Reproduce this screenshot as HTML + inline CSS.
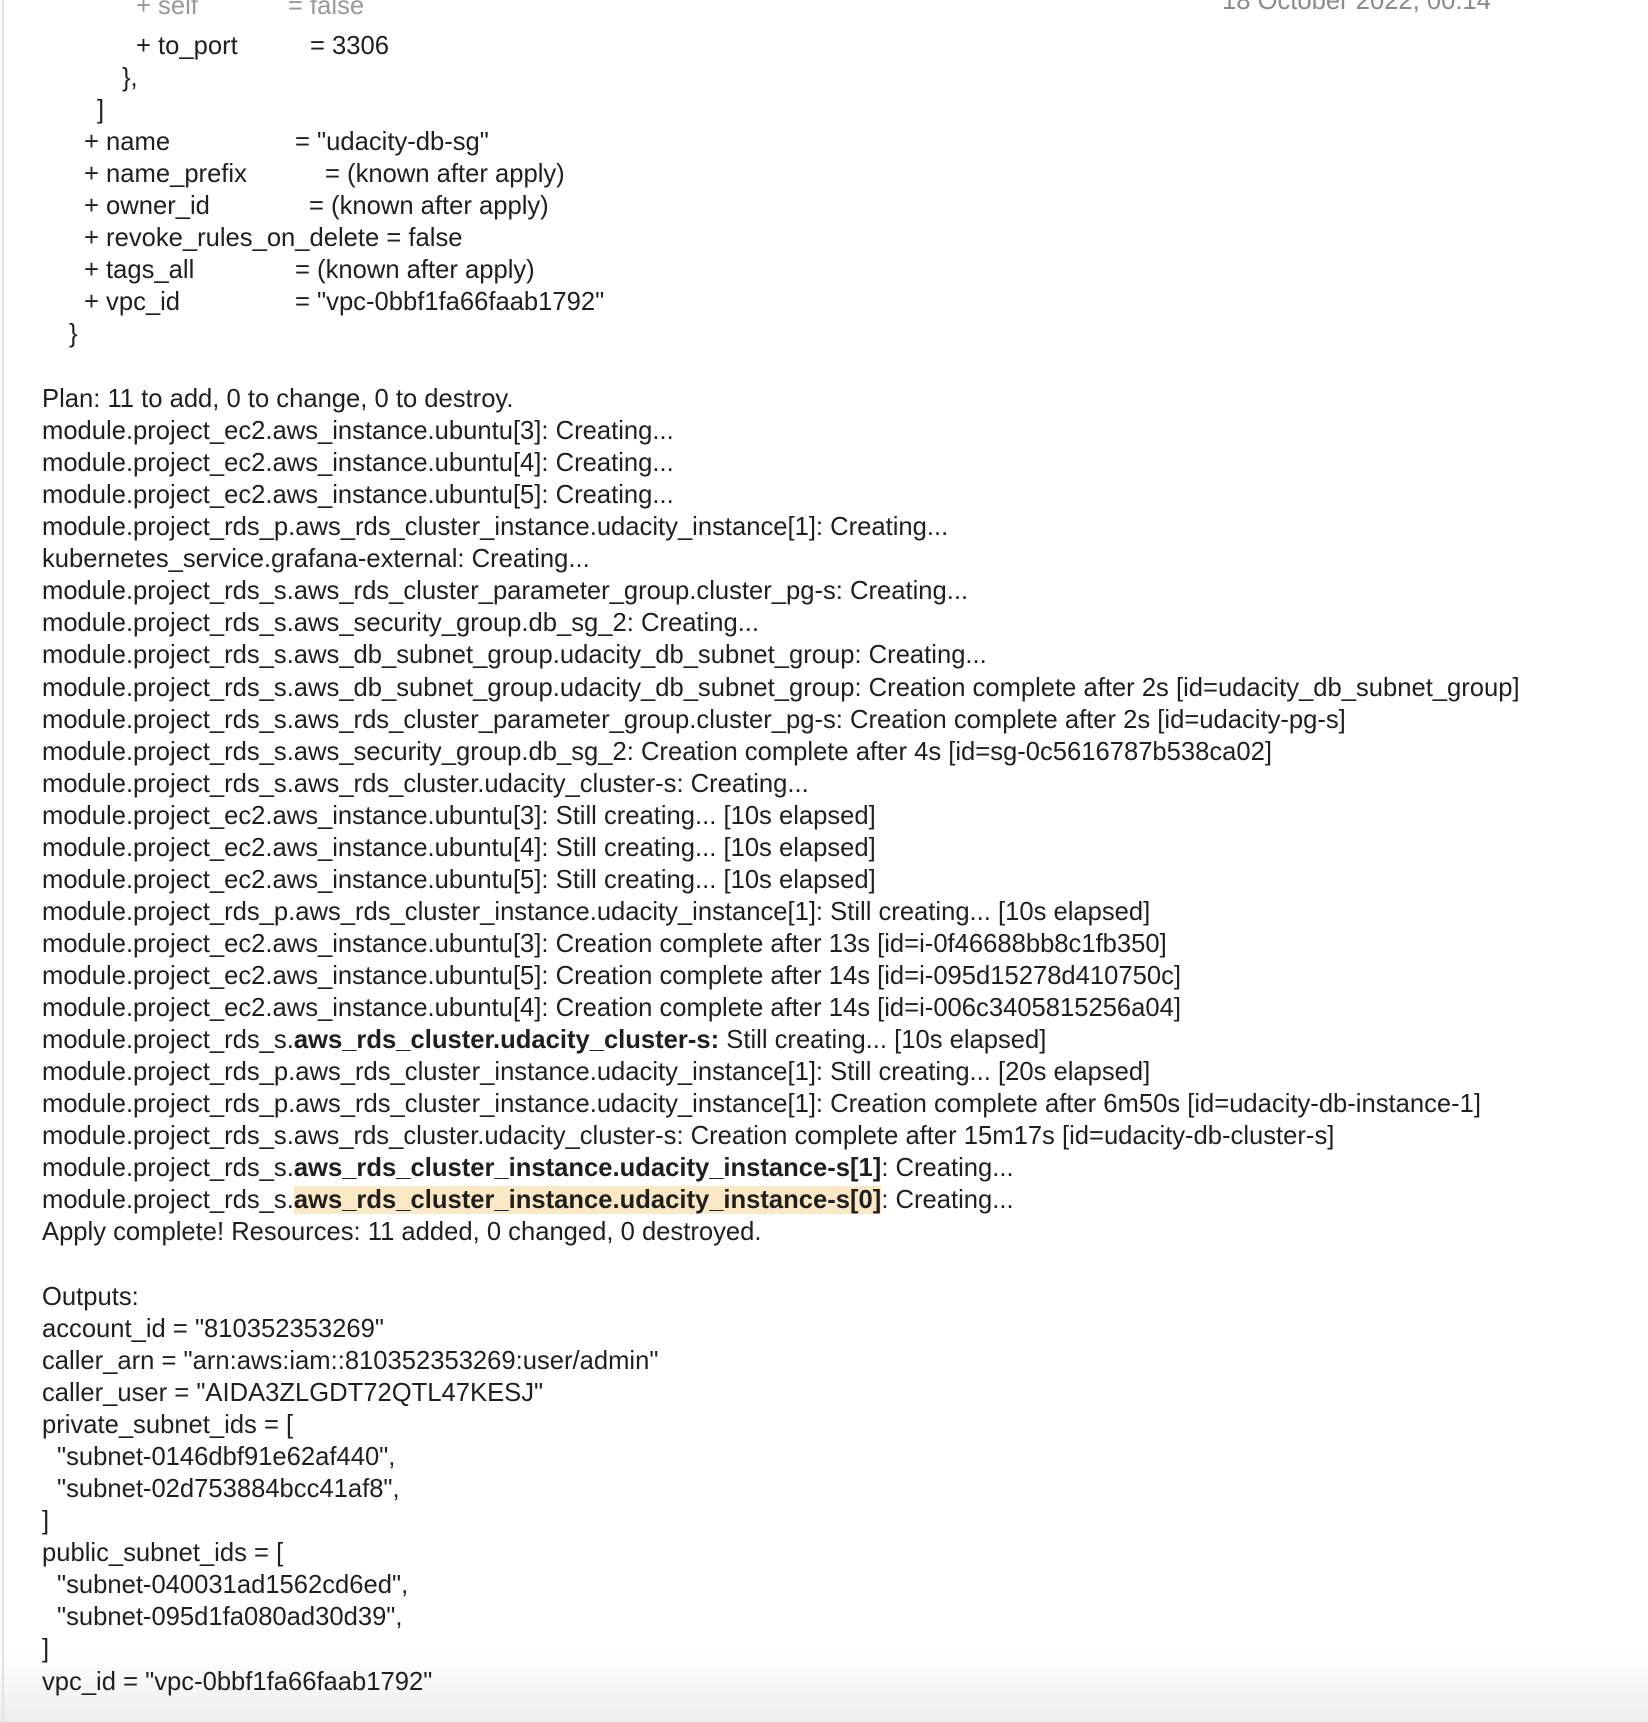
<!DOCTYPE html>
<html><head><meta charset="utf-8"><style>
html,body{margin:0;padding:0;background:#fff;width:1648px;height:1722px;overflow:hidden;position:relative}
body{font-family:"Liberation Sans",Arial,sans-serif;font-size:25.6px;color:#1f1f1f}
.l{position:absolute;height:32px;line-height:32px;white-space:pre;z-index:1}
.v{position:absolute;white-space:pre}
b{font-weight:bold}
.hl{background:#fbe9c6}
#border{position:absolute;left:2px;top:0;width:2px;height:1722px;background:#e3e3e3;z-index:2}
#fade{position:absolute;left:0;right:0;bottom:0;height:70px;background:linear-gradient(rgba(255,255,255,0),#ededed);z-index:0}
</style></head><body>
<div id="fade"></div>
<div id="border"></div>
<div class="l" style="left:1222px;top:-15px;color:#8a8a8a">18 October 2022, 00:14</div>
<div class="l" style="left:136px;top:-10px;color:#999">+ self<span class="v" style="left:152px">= false</span></div>
<div class="l" style="left:136px;top:30px">+ to_port<span class="v" style="left:174px">= 3306</span></div>
<div class="l" style="left:122px;top:62px">},</div>
<div class="l" style="left:97px;top:94px">]</div>
<div class="l" style="left:84px;top:126px">+ name<span class="v" style="left:211px">= "udacity-db-sg"</span></div>
<div class="l" style="left:84px;top:158px">+ name_prefix<span class="v" style="left:241px">= (known after apply)</span></div>
<div class="l" style="left:84px;top:190px">+ owner_id<span class="v" style="left:225px">= (known after apply)</span></div>
<div class="l" style="left:84px;top:222px">+ revoke_rules_on_delete = false</div>
<div class="l" style="left:84px;top:254px">+ tags_all<span class="v" style="left:211px">= (known after apply)</span></div>
<div class="l" style="left:84px;top:286px">+ vpc_id<span class="v" style="left:211px">= "vpc-0bbf1fa66faab1792"</span></div>
<div class="l" style="left:69px;top:318px">}</div>

<div class="l" style="left:42px;top:383px">Plan: 11 to add, 0 to change, 0 to destroy.</div>
<div class="l" style="left:42px;top:415px">module.project_ec2.aws_instance.ubuntu[3]: Creating...</div>
<div class="l" style="left:42px;top:447px">module.project_ec2.aws_instance.ubuntu[4]: Creating...</div>
<div class="l" style="left:42px;top:479px">module.project_ec2.aws_instance.ubuntu[5]: Creating...</div>
<div class="l" style="left:42px;top:511px">module.project_rds_p.aws_rds_cluster_instance.udacity_instance[1]: Creating...</div>
<div class="l" style="left:42px;top:543px">kubernetes_service.grafana-external: Creating...</div>
<div class="l" style="left:42px;top:575px">module.project_rds_s.aws_rds_cluster_parameter_group.cluster_pg-s: Creating...</div>
<div class="l" style="left:42px;top:607px">module.project_rds_s.aws_security_group.db_sg_2: Creating...</div>
<div class="l" style="left:42px;top:639px">module.project_rds_s.aws_db_subnet_group.udacity_db_subnet_group: Creating...</div>
<div class="l" style="left:42px;top:672px">module.project_rds_s.aws_db_subnet_group.udacity_db_subnet_group: Creation complete after 2s [id=udacity_db_subnet_group]</div>
<div class="l" style="left:42px;top:704px">module.project_rds_s.aws_rds_cluster_parameter_group.cluster_pg-s: Creation complete after 2s [id=udacity-pg-s]</div>
<div class="l" style="left:42px;top:736px">module.project_rds_s.aws_security_group.db_sg_2: Creation complete after 4s [id=sg-0c5616787b538ca02]</div>
<div class="l" style="left:42px;top:768px">module.project_rds_s.aws_rds_cluster.udacity_cluster-s: Creating...</div>
<div class="l" style="left:42px;top:800px">module.project_ec2.aws_instance.ubuntu[3]: Still creating... [10s elapsed]</div>
<div class="l" style="left:42px;top:832px">module.project_ec2.aws_instance.ubuntu[4]: Still creating... [10s elapsed]</div>
<div class="l" style="left:42px;top:864px">module.project_ec2.aws_instance.ubuntu[5]: Still creating... [10s elapsed]</div>
<div class="l" style="left:42px;top:896px">module.project_rds_p.aws_rds_cluster_instance.udacity_instance[1]: Still creating... [10s elapsed]</div>
<div class="l" style="left:42px;top:928px">module.project_ec2.aws_instance.ubuntu[3]: Creation complete after 13s [id=i-0f46688bb8c1fb350]</div>
<div class="l" style="left:42px;top:960px">module.project_ec2.aws_instance.ubuntu[5]: Creation complete after 14s [id=i-095d15278d410750c]</div>
<div class="l" style="left:42px;top:992px">module.project_ec2.aws_instance.ubuntu[4]: Creation complete after 14s [id=i-006c3405815256a04]</div>
<div class="l" style="left:42px;top:1024px">module.project_rds_s.<b>aws_rds_cluster.udacity_cluster-s:</b> Still creating... [10s elapsed]</div>
<div class="l" style="left:42px;top:1056px">module.project_rds_p.aws_rds_cluster_instance.udacity_instance[1]: Still creating... [20s elapsed]</div>
<div class="l" style="left:42px;top:1088px">module.project_rds_p.aws_rds_cluster_instance.udacity_instance[1]: Creation complete after 6m50s [id=udacity-db-instance-1]</div>
<div class="l" style="left:42px;top:1120px">module.project_rds_s.aws_rds_cluster.udacity_cluster-s: Creation complete after 15m17s [id=udacity-db-cluster-s]</div>
<div class="l" style="left:42px;top:1152px">module.project_rds_s.<b>aws_rds_cluster_instance.udacity_instance-s[1]</b>: Creating...</div>
<div class="l" style="left:42px;top:1184px">module.project_rds_s.<b class="hl">aws_rds_cluster_instance.udacity_instance-s[0]</b>: Creating...</div>
<div class="l" style="left:42px;top:1216px">Apply complete! Resources: 11 added, 0 changed, 0 destroyed.</div>
<div class="l" style="left:42px;top:1281px">Outputs:</div>
<div class="l" style="left:42px;top:1313px">account_id = "810352353269"</div>
<div class="l" style="left:42px;top:1345px">caller_arn = "arn:aws:iam::810352353269:user/admin"</div>
<div class="l" style="left:42px;top:1377px">caller_user = "AIDA3ZLGDT72QTL47KESJ"</div>
<div class="l" style="left:42px;top:1409px">private_subnet_ids = [</div>
<div class="l" style="left:57px;top:1441px">"subnet-0146dbf91e62af440",</div>
<div class="l" style="left:57px;top:1473px">"subnet-02d753884bcc41af8",</div>
<div class="l" style="left:42px;top:1505px">]</div>
<div class="l" style="left:42px;top:1537px">public_subnet_ids = [</div>
<div class="l" style="left:57px;top:1569px">"subnet-040031ad1562cd6ed",</div>
<div class="l" style="left:57px;top:1601px">"subnet-095d1fa080ad30d39",</div>
<div class="l" style="left:42px;top:1633px">]</div>
<div class="l" style="left:42px;top:1666px">vpc_id = "vpc-0bbf1fa66faab1792"</div>
</body></html>
